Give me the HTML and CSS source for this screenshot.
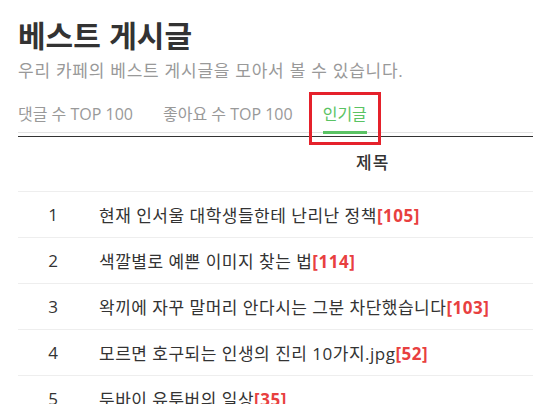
FILE: index.html
```html
<!DOCTYPE html>
<html lang="ko">
<head>
<meta charset="utf-8">
<link rel="stylesheet" href="styles.css">
</head>
<body>
<div class="page">
  <h1 class="title">베스트 게시글</h1>
  <p class="subtitle">우리 카페의 베스트 게시글을 모아서 볼 수 있습니다.</p>
  <nav class="tabs">
    <a class="tab">댓글 수 TOP 100</a>
    <a class="tab">좋아요 수 TOP 100</a>
    <a class="tab active">인기글</a>
  </nav>
  <div class="highlight"></div>
  <table class="board">
    <thead>
      <tr><th class="num"></th><th class="subject">제목</th></tr>
    </thead>
    <tbody>
      <tr><td class="num">1</td><td class="subject">현재 인서울 대학생들한테 난리난 정책<b class="count">[105]</b></td></tr>
      <tr><td class="num">2</td><td class="subject">색깔별로 예쁜 이미지 찾는 법<b class="count">[114]</b></td></tr>
      <tr><td class="num">3</td><td class="subject">왁끼에 자꾸 말머리 안다시는 그분 차단했습니다<b class="count">[103]</b></td></tr>
      <tr><td class="num">4</td><td class="subject">모르면 호구되는 인생의 진리 10가지.jpg<b class="count">[52]</b></td></tr>
      <tr><td class="num">5</td><td class="subject">두바이 유투버의 일상<b class="count">[35]</b></td></tr>
    </tbody>
  </table>
</div>
</body>
</html>
```
FILE: styles.css
```css
html, body {
  margin: 0;
  padding: 0;
  background: #fff;
  overflow: hidden;
}
body {
  font-family: "Open Sans", "Noto Sans CJK KR", sans-serif;
  color: #333;
}
.page {
  position: relative;
  padding-left: 18px;
}
.title {
  margin: 0;
  padding-top: 14px;
  font-family: "Noto Sans CJK KR", sans-serif;
  font-size: 30px;
  line-height: 40px;
  font-weight: 700;
  color: #333;
}
.subtitle {
  margin: 5px 0 0;
  font-size: 17px;
  line-height: 24px;
  letter-spacing: 0.75px;
  color: #999;
}
.tabs {
  display: flex;
  gap: 30px;
  margin-top: 20px;
  border-bottom: 1px solid #e3e3e3;
}
.tab {
  font-size: 16px;
  line-height: 22px;
  padding-bottom: 6px;
  border-bottom: 3px solid transparent;
  margin-bottom: -2px;
  color: #999;
}
.tab.active {
  color: #5ac363;
  border-bottom-color: #5ac363;
}
.highlight {
  position: absolute;
  left: 309px;
  top: 92px;
  width: 66px;
  height: 47px;
  border: 3px solid #e5212b;
}
.board {
  width: 100%;
  margin-top: 3px;
  border-collapse: collapse;
  border-top: 1px solid #333;
  font-size: 17px;
}
.board th {
  height: 55px;
  padding: 0 0 6px;
  font-weight: 500;
  color: #333;
  border-bottom: 1px solid #eee;
  box-sizing: border-box;
}
.board th.subject {
  text-align: left;
  padding-left: 268px;
  letter-spacing: 1px;
}
.board td {
  height: 45px;
  padding: 0;
  border-bottom: 1px solid #eee;
}
.board .num {
  width: 70px;
  text-align: center;
}
.board td.subject {
  padding-left: 11px;
  letter-spacing: 0.5px;
}
.count {
  color: #e8403f;
  font-weight: 700;
}
```
